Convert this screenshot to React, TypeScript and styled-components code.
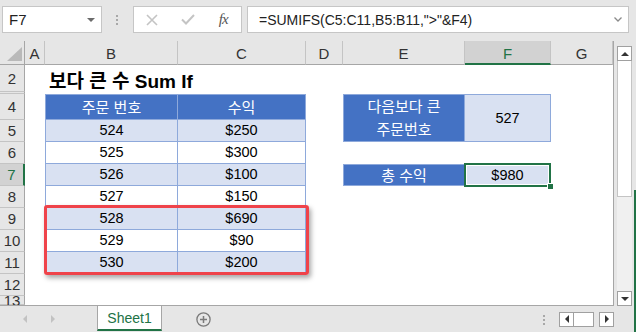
import React from "react";
import styled, { createGlobalStyle, css } from "styled-components";

const BLUE = "#4472c4";
const LIGHT = "#d9e1f2";
const LINE = "#8ea9db";
const GREEN = "#217346";
const SANS = `"Liberation Sans", "Noto Sans CJK KR", sans-serif`;

const GlobalStyle = createGlobalStyle`
  html, body {
    margin: 0;
    padding: 0;
  }
  body {
    font-family: ${SANS};
    background: #e6e6e6;
  }
`;

const Window = styled.div`
  width: 636px;
  height: 332px;
  display: flex;
  background: #e6e6e6;
  overflow: hidden;
`;

const Main = styled.div`
  width: 634px;
  display: flex;
  flex-direction: column;
`;

// green window edge, only visible on the lower part
const Edge = styled.div`
  width: 2px;
  display: flex;
  flex-direction: column;
  &::after {
    content: "";
    margin-top: 190px;
    flex: 1;
    background: ${GREEN};
  }
`;

/* ---------- formula bar ---------- */

const FormulaBar = styled.div`
  height: 41px;
  display: flex;
  align-items: flex-start;
  padding-top: 6px;
  box-sizing: border-box;
`;

const Box = styled.div<{ $width: number; $gap: number }>`
  width: ${(p) => p.$width}px;
  margin-left: ${(p) => p.$gap}px;
  height: 27px;
  box-sizing: border-box;
  border: 1px solid #c6c6c6;
  background: #fff;
  display: flex;
  align-items: center;
`;

const NameText = styled.span`
  flex: 1;
  padding-left: 6px;
  font-size: 15px;
  color: #222;
`;

const DropArrow = styled.span`
  width: 0;
  height: 0;
  margin-right: 6px;
  border-left: 4px solid transparent;
  border-right: 4px solid transparent;
  border-top: 4px solid #6b6b6b;
`;

const Grip = styled.div`
  margin: 9px 0 0 14px;
  width: 2px;
  display: flex;
  flex-direction: column;
  gap: 2px;
  span {
    width: 2px;
    height: 2px;
    background: #a8a8a8;
  }
`;

const IconSlot = styled.span`
  width: 36px;
  display: flex;
  justify-content: center;
  align-items: center;
`;

const Fx = styled.span`
  font-family: "Liberation Serif", serif;
  font-style: italic;
  font-size: 15px;
  color: #555;
  letter-spacing: -1px;
`;

const FormulaText = styled.span`
  flex: 1;
  padding-left: 11px;
  font-size: 14px;
  color: #222;
  white-space: nowrap;
`;

const Chevron = styled.span`
  margin-right: 6px;
  display: flex;
`;

/* ---------- sheet grid ---------- */

const Middle = styled.div`
  display: flex;
  height: 265px;
`;

const Sheet = styled.div`
  position: relative;
  display: grid;
  grid-template-columns: 25px 20px 133px 128px 37px 122px 86px 62px;
  grid-template-rows: 24px 27px 2px 26px repeat(8, 22px) 9px;
  width: 613px;
  background: #fff;
  border-right: 1px solid #a6a6a6;
  border-bottom: 1px solid #a6a6a6;
  overflow: hidden;
`;

const Corner = styled.div`
  grid-column: 1;
  grid-row: 1;
  background: #e6e6e6;
  border-right: 1px solid #a6a6a6;
  border-bottom: 1px solid #a6a6a6;
  display: flex;
  align-items: flex-end;
  justify-content: flex-end;
  padding: 0 2px 3px 0;
`;

const ColHead = styled.div<{ $col: number; $active?: boolean }>`
  grid-column: ${(p) => p.$col};
  grid-row: 1;
  display: flex;
  align-items: center;
  justify-content: center;
  padding-top: 2px;
  font-size: 15px;
  background: ${(p) => (p.$active ? "#d2d2d2" : "#e6e6e6")};
  color: ${(p) => (p.$active ? GREEN : "#333")};
  border-right: 1px solid #c4c4c4;
  border-bottom: ${(p) => (p.$active ? `2px solid ${GREEN}` : "1px solid #a6a6a6")};
`;

const RowHead = styled.div<{ $row: number; $active?: boolean }>`
  grid-column: 1;
  grid-row: ${(p) => p.$row};
  display: flex;
  align-items: center;
  justify-content: center;
  font-size: 15px;
  background: ${(p) => (p.$active ? "#d2d2d2" : "#e6e6e6")};
  color: ${(p) => (p.$active ? GREEN : "#333")};
  border-bottom: 1px solid #c4c4c4;
  border-right: ${(p) => (p.$active ? `2px solid ${GREEN}` : "1px solid #a6a6a6")};
`;

type Fill = "blue" | "light" | "white";

const Cell = styled.div<{
  $col: number;
  $row: number;
  $span?: number;
  $fill: Fill;
  $top?: boolean;
  $left?: boolean;
}>`
  grid-column: ${(p) => p.$col};
  grid-row: ${(p) => p.$row} / span ${(p) => p.$span ?? 1};
  display: flex;
  align-items: center;
  justify-content: center;
  text-align: center;
  font-size: 14.5px;
  line-height: 23px;
  background: ${(p) => (p.$fill === "blue" ? BLUE : p.$fill === "light" ? LIGHT : "#fff")};
  color: ${(p) => (p.$fill === "blue" ? "#fff" : "#000")};
  border-right: 1px solid ${LINE};
  border-bottom: 1px solid ${LINE};
  ${(p) => p.$top && css`border-top: 1px solid ${LINE};`}
  ${(p) => p.$left && css`border-left: 1px solid ${LINE};`}
  ${(p) => p.$fill === "blue" && css`font-size: 15px;`}
`;

const Selected = styled(Cell)`
  position: relative;
  &::after {
    content: "";
    position: absolute;
    left: -1px;
    top: -2px;
    right: -1px;
    bottom: -2px;
    border: 2px solid ${GREEN};
    box-shadow: inset 0 0 0 1px #fff;
  }
  &::before {
    content: "";
    position: absolute;
    right: -4px;
    bottom: -5px;
    width: 5px;
    height: 5px;
    background: ${GREEN};
    border: 1px solid #fff;
    z-index: 2;
  }
`;

const Title = styled.div`
  grid-column: 3 / span 4;
  grid-row: 2;
  display: flex;
  align-items: center;
  padding: 2px 0 0 4px;
  font-size: 19px;
  font-weight: bold;
  color: #000;
  white-space: nowrap;
`;

const Highlight = styled.div`
  position: absolute;
  left: 44px;
  top: 164px;
  width: 265px;
  height: 70px;
  box-sizing: border-box;
  border: 3px solid #ef434a;
  border-radius: 3px;
  box-shadow: 2px 3px 5px rgba(0, 0, 0, 0.35);
  pointer-events: none;
`;

/* ---------- scrollbars ---------- */

const VScroll = styled.div`
  width: 15px;
  height: 260px;
  margin: 5px 0 0 3px;
  display: flex;
  flex-direction: column;
  background: #f0f0f0;
`;

const ScrollBtn = styled.div`
  width: 15px;
  height: 15px;
  box-sizing: border-box;
  border: 1px solid #a0a0a0;
  background: #fff;
  display: flex;
  align-items: center;
  justify-content: center;
`;

const VThumb = styled.div`
  height: 136px;
  box-sizing: border-box;
  border: 1px solid #c4c4c4;
  border-top: none;
  background: #fff;
`;

const Spacer = styled.div`
  flex: 1;
`;

const Tri = styled.span<{ $dir: "up" | "down" | "left" | "right"; $color?: string; $size?: number }>`
  width: 0;
  height: 0;
  ${(p) => {
    const s = p.$size ?? 4;
    const c = p.$color ?? "#333";
    switch (p.$dir) {
      case "up":
        return css`border-left: ${s}px solid transparent; border-right: ${s}px solid transparent; border-bottom: ${s}px solid ${c};`;
      case "down":
        return css`border-left: ${s}px solid transparent; border-right: ${s}px solid transparent; border-top: ${s}px solid ${c};`;
      case "left":
        return css`border-top: ${s}px solid transparent; border-bottom: ${s}px solid transparent; border-right: ${s}px solid ${c};`;
      default:
        return css`border-top: ${s}px solid transparent; border-bottom: ${s}px solid transparent; border-left: ${s}px solid ${c};`;
    }
  }}
`;

/* ---------- tab bar ---------- */

const TabBar = styled.div`
  height: 26px;
  display: flex;
  align-items: stretch;
`;

const NavBtn = styled.div<{ $gap: number }>`
  margin-left: ${(p) => p.$gap}px;
  width: 6px;
  display: flex;
  align-items: center;
  justify-content: center;
`;

const SheetTab = styled.div`
  margin-left: 41px;
  width: 65px;
  height: 25px;
  box-sizing: border-box;
  background: #fff;
  border-left: 1px solid #a6a6a6;
  border-right: 1px solid #a6a6a6;
  border-bottom: 2px solid ${GREEN};
  display: flex;
  align-items: center;
  justify-content: center;
  font-size: 14px;
  color: ${GREEN};
`;

const AddBtn = styled.div`
  margin-left: 34px;
  display: flex;
  align-items: center;
`;

const TabGrip = styled(Grip)`
  margin: 9px 0 0 0;
`;

const HScroll = styled.div`
  margin-left: 14px;
  display: flex;
  align-items: center;
  gap: 0;
`;

const HThumb = styled.div`
  width: 20px;
  height: 15px;
  box-sizing: border-box;
  border: 1px solid #a0a0a0;
  border-left: none;
  background: #fff;
  margin-right: 5px;
`;

const rows = [
  ["524", "$250"],
  ["525", "$300"],
  ["526", "$100"],
  ["527", "$150"],
  ["528", "$690"],
  ["529", "$90"],
  ["530", "$200"],
];

const columns = ["A", "B", "C", "D", "E", "F", "G"];
const rowLabels: [number, string][] = [
  [2, "2"],
  [3, ""],
  [4, "4"],
  [5, "5"],
  [6, "6"],
  [7, "7"],
  [8, "8"],
  [9, "9"],
  [10, "10"],
  [11, "11"],
  [12, "12"],
  [13, "13"],
];

export default function App() {
  return (
    <>
      <GlobalStyle />
      <Window>
        <Main>
          <FormulaBar>
            <Box $width={100} $gap={2}>
              <NameText>F7</NameText>
              <DropArrow />
            </Box>
            <Grip>
              <span />
              <span />
              <span />
            </Grip>
            <Box $width={109} $gap={15}>
              <IconSlot>
                <svg width="12" height="12" viewBox="0 0 12 12">
                  <path d="M1 1L11 11M11 1L1 11" stroke="#c4c4c4" strokeWidth="1.6" />
                </svg>
              </IconSlot>
              <IconSlot>
                <svg width="14" height="11" viewBox="0 0 14 11">
                  <path d="M1 5.5L5 9.5L13 1" stroke="#c4c4c4" strokeWidth="2" fill="none" />
                </svg>
              </IconSlot>
              <IconSlot>
                <Fx>fx</Fx>
              </IconSlot>
            </Box>
            <Box $width={382} $gap={5}>
              <FormulaText>=SUMIFS(C5:C11,B5:B11,"&gt;"&amp;F4)</FormulaText>
              <Chevron>
                <svg width="8" height="5" viewBox="0 0 8 5">
                  <path d="M0.5 0.5L4 4L7.5 0.5" stroke="#8a8a8a" strokeWidth="1.3" fill="none" />
                </svg>
              </Chevron>
            </Box>
          </FormulaBar>

          <Middle>
            <Sheet>
              <Corner>
                <svg width="15" height="14" viewBox="0 0 15 14">
                  <polygon points="15,0 15,14 0,14" fill="#b9b9b9" />
                </svg>
              </Corner>
              {columns.map((c, i) => (
                <ColHead key={c} $col={i + 2} $active={c === "F"}>
                  {c}
                </ColHead>
              ))}
              {rowLabels.map(([r, label]) => (
                <RowHead key={r} $row={r} $active={r === 7}>
                  {label}
                </RowHead>
              ))}

              <Title>보다 큰 수 Sum If</Title>

              <Cell $col={3} $row={4} $fill="blue" $top $left>
                주문 번호
              </Cell>
              <Cell $col={4} $row={4} $fill="blue" $top>
                수익
              </Cell>
              {rows.map(([order, revenue], i) => {
                const fill: Fill = i % 2 === 0 ? "light" : "white";
                return (
                  <React.Fragment key={order}>
                    <Cell $col={3} $row={i + 5} $fill={fill} $left>
                      {order}
                    </Cell>
                    <Cell $col={4} $row={i + 5} $fill={fill}>
                      {revenue}
                    </Cell>
                  </React.Fragment>
                );
              })}

              <Cell $col={6} $row={4} $span={2} $fill="blue" $top $left>
                다음보다 큰
                <br />
                주문번호
              </Cell>
              <Cell $col={7} $row={4} $span={2} $fill="light" $top>
                527
              </Cell>
              <Cell $col={6} $row={7} $fill="blue" $top $left>
                총 수익
              </Cell>
              <Selected $col={7} $row={7} $fill="light" $top>
                $980
              </Selected>

              <Highlight />
            </Sheet>
            <VScroll>
              <ScrollBtn>
                <Tri $dir="up" />
              </ScrollBtn>
              <VThumb />
              <Spacer />
              <ScrollBtn>
                <Tri $dir="down" />
              </ScrollBtn>
            </VScroll>
          </Middle>

          <TabBar>
            <NavBtn $gap={22}>
              <Tri $dir="left" $color="#c2c2c2" />
            </NavBtn>
            <NavBtn $gap={22}>
              <Tri $dir="right" $color="#c2c2c2" />
            </NavBtn>
            <SheetTab>Sheet1</SheetTab>
            <AddBtn>
              <svg width="15" height="15" viewBox="0 0 15 15">
                <circle cx="7.5" cy="7.5" r="6.6" fill="none" stroke="#7a7a7a" strokeWidth="1.3" />
                <path d="M7.5 4V11M4 7.5H11" stroke="#7a7a7a" strokeWidth="1.5" />
              </svg>
            </AddBtn>
            <Spacer />
            <TabGrip>
              <span />
              <span />
              <span />
            </TabGrip>
            <HScroll>
              <ScrollBtn>
                <Tri $dir="left" />
              </ScrollBtn>
              <HThumb />
              <ScrollBtn>
                <Tri $dir="right" />
              </ScrollBtn>
            </HScroll>
            <div style={{ width: 20 }} />
          </TabBar>
        </Main>
        <Edge />
      </Window>
    </>
  );
}
